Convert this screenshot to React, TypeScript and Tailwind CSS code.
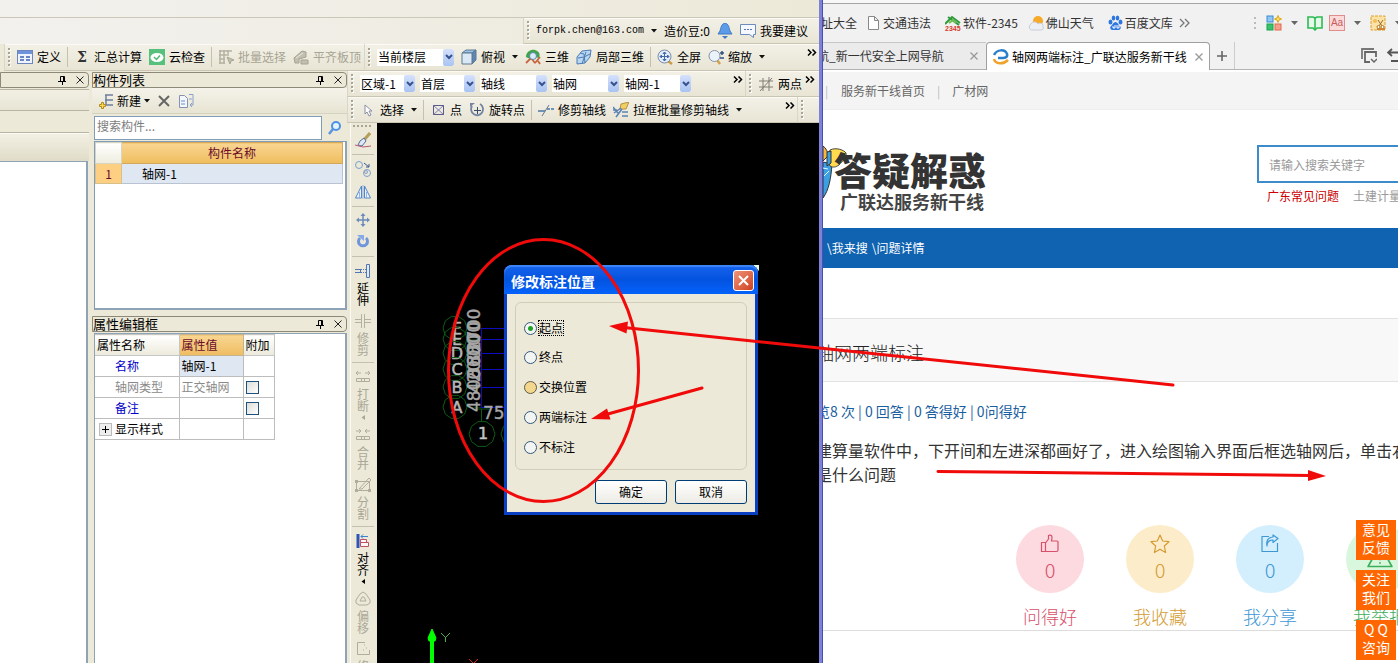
import React from "react";

type Kids = { children?: React.ReactNode };

/* ---------- shared toolbar parts ---------- */

function Svg({ children, w = 16, h = 16, box }: Kids & { w?: number; h?: number; box?: string }) {
  return (
    <svg width={w} height={h} viewBox={box ?? `0 0 ${w} ${h}`} fill="none" className="shrink-0" aria-hidden="true">
      {children}
    </svg>
  );
}

function Grip() {
  return (
    <svg width="3" height="19" viewBox="0 0 3 19" className="shrink-0" aria-hidden="true">
      {[0, 4, 8, 12, 16].map((y) => (
        <g key={y}>
          <rect x="1" y={y + 1} width="2" height="2" fill="#fff" />
          <rect x="0" y={y} width="2" height="2" fill="#a9a594" />
        </g>
      ))}
    </svg>
  );
}

function Bar({ children, className = "" }: Kids & { className?: string }) {
  return (
    <div
      className={`flex items-center overflow-hidden border-b border-[#c9c5b2] bg-linear-to-b from-[#f3f1e7] to-[#e8e5d5] pl-[3px] shadow-[inset_0_1px_0_#fbfaf5] ${className}`}
    >
      <Grip />
      <div className="flex h-full min-w-0 flex-1 items-center gap-[7px] pl-1.5">{children}</div>
    </div>
  );
}

function Tool({ icon, label, off }: { icon: React.ReactNode; label: string; off?: boolean }) {
  return (
    <button type="button" disabled={off} className={`flex shrink-0 items-center gap-1 whitespace-nowrap ${off ? "text-[#a7a493]" : "text-black"}`}>
      {icon}
      {label}
    </button>
  );
}

function Sep() {
  return <span className="-mx-px h-5 w-px shrink-0 bg-[#c5c1ae]" />;
}

function Caret() {
  return (
    <Svg w={6} h={4}>
      <path d="M0 0h6L3 3.5z" fill="#111" />
    </Svg>
  );
}

function More({ className = "" }: { className?: string }) {
  return (
    <button type="button" aria-label="更多" className={`shrink-0 self-start pt-[5px] ${className}`}>
      <Svg w={10} h={7}>
        <path d="M1 .5l3 3-3 3M5.500 .5l3 3-3 3" stroke="#000" strokeWidth="1.500" />
      </Svg>
    </button>
  );
}

function Combo({ value, width, name }: { value: string; width: string; name: string }) {
  return (
    <span className={`relative flex h-[17px] shrink-0 ${width}`}>
      <select aria-label={name} className="w-full appearance-none bg-white pr-3 pl-px text-[12px] leading-[16px]" defaultValue={value}>
        <option>{value}</option>
      </select>
      <span className="pointer-events-none absolute inset-y-0 right-0 flex w-[11px] items-center justify-center rounded-[2px] bg-linear-to-b from-[#d5e1fc] to-[#a9c3f2]">
        <Svg w={8} h={6}>
          <path d="M1 1l3 3 3-3" stroke="#35528f" strokeWidth="2" />
        </Svg>
      </span>
    </span>
  );
}

/* ---------- toolbar icons ---------- */

const DefineIcon = () => (
  <Svg>
    <rect x=".5" y="1.500" width="15" height="13" fill="#eef3fc" stroke="#6f86bd" />
    <rect x="1" y="2" width="14" height="3" fill="#6d93dc" />
    <path d="M3 8h4M3 11h4M9 8h4M9 11h4" stroke="#3d62b4" strokeWidth="1.500" />
  </Svg>
);
const CloudIcon = () => (
  <Svg>
    <rect width="16" height="16" fill="#57c07c" />
    <ellipse cx="8" cy="8.500" rx="6.500" ry="4.500" fill="#fff" />
    <path d="M5 8l2.500 2.500L11 6.500" stroke="#4fb873" strokeWidth="1.500" />
  </Svg>
);
const BatchIcon = () => (
  <Svg>
    <path d="M1 2h13M1 6h8M1 10h6M1 14h6M2 1v14M6 1v14M10 1v6" stroke="#b5b2a2" strokeWidth="1.500" />
    <path d="M9 8l3 7 1-3 3-1z" fill="#c3c0b1" stroke="#a9a696" />
  </Svg>
);
const SlabIcon = () => (
  <Svg>
    <path d="M1 9l8-7 4 1v5l-7 2v4H2zM8 11h7v4H8z" fill="#c2bfb0" stroke="#a5a293" />
    <path d="M3 9l7-5" stroke="#eae7d9" />
  </Svg>
);
const CubeIcon = () => (
  <Svg>
    <path d="M1 4l4-3h10l-4 3z" fill="#9cc4ea" stroke="#5f7891" />
    <path d="M11 4l4-3v10l-4 4z" fill="#5e88b4" stroke="#5f7891" />
    <path d="M1 4h10v11H1z" fill="#dbe9f6" stroke="#5f7891" />
  </Svg>
);
const OrbitIcon = () => (
  <Svg>
    <path d="M1 8C1 2 7 0 10 1s6 3 4 8l-4-1-3 3z" fill="#3fa44b" />
    <path d="M1 14l5-5 4 5M10 14l5-6M13 12l2 3" stroke="#c8653c" strokeWidth="1.800" />
    <circle cx="8" cy="7" r="3.500" fill="#d9ecfa" stroke="#5e84ad" />
  </Svg>
);
const LocalIcon = () => (
  <Svg>
    <path d="M1 8l5-6 9-1-1 7-5 6-8 1z" fill="#b9d6f2" stroke="#4c7cb5" />
    <path d="M4 4l4 1 1 9M6 15l4-12M2 9l6-1 6-3" stroke="#4c7cb5" />
  </Svg>
);
const FullIcon = () => (
  <Svg>
    <path d="M11 12l4 3" stroke="#cc9d3f" strokeWidth="2.500" />
    <circle cx="7.500" cy="7.500" r="6.500" fill="#e3eefb" stroke="#7a8ca8" />
    <path d="M3 7.500h9M7.500 3v9M3 7.500l1.500-1.500v3zM12 7.500l-1.500-1.500v3zM7.500 3L6 4.500h3zM7.500 12L6 10.500h3z" stroke="#466aa5" />
  </Svg>
);
const ZoomIcon = () => (
  <Svg>
    <path d="M9 11l3 4" stroke="#d4a04a" strokeWidth="2.500" />
    <circle cx="6.500" cy="7" r="5.500" fill="#eaf2fb" stroke="#8794a6" />
    <path d="M12 4h4M14 2v4M12 9h4" stroke="#33517f" strokeWidth="1.500" />
  </Svg>
);
const GridIcon = () => (
  <Svg>
    <path d="M5 2v13M11 1v14M1 5h14M1 11h14M2 15L14 2" stroke="#817d72" />
  </Svg>
);
const CursorIcon = () => (
  <Svg>
    <path d="M5 3v9l2-2 2 4 2-1-2-4h3z" fill="#fff" stroke="#8a8fa5" />
  </Svg>
);
const PointIcon = () => (
  <Svg>
    <rect x="3.500" y="3.500" width="10" height="9" stroke="#5c5a86" />
    <path d="M3.500 3.500l10 9M13.500 3.500l-10 9" stroke="#8281b5" />
  </Svg>
);
const RotPointIcon = () => (
  <Svg>
    <path d="M3 4a6 6 0 1 0 8-2" stroke="#7583a0" strokeWidth="1.800" />
    <path d="M1 5V1h5z" fill="#7583a0" />
    <path d="M5 8.500h7M8.500 5v7" stroke="#3b4a68" />
  </Svg>
);
const TrimAxisIcon = () => (
  <Svg>
    <path d="M0 9h7M9 7h3M13 7h3" stroke="#4877a8" strokeWidth="1.500" />
    <path d="M4 14l7-11" stroke="#6a7683" />
  </Svg>
);
const BoxTrimIcon = () => (
  <Svg>
    <path d="M8 2l8-2-3 7H7z" fill="#f0cf65" stroke="#b4923c" />
    <path d="M0 5l5 6M1 11l7-5M3 15l6-8M9 10h6M9 14h6M0 8h4" stroke="#5a83b5" strokeWidth="1.500" />
  </Svg>
);

/* ---------- dock panels ---------- */

function DockHeader({ title }: { title?: string }) {
  return (
    <div className="flex h-4 shrink-0 items-center rounded-r-sm border border-[#8c8979] bg-[#ece9d8]">
      <h2 className="flex-1 text-[13px] leading-[14px] whitespace-nowrap">{title}</h2>
      <button type="button" aria-label="固定" className="mr-1.5 p-0.5">
        <Svg w={8} h={9}>
          <path d="M2.500 .5h4v5M2.500 .5v5M0 5.500h8M4.500 6v3" stroke="#000" />
          <path d="M5.500 1v5" stroke="#000" />
        </Svg>
      </button>
      <button type="button" aria-label="关闭" className="mr-0.5 p-0.5">
        <Svg w={8} h={8}>
          <path d="M.5 .5l7 7M7.500 .5l-7 7" stroke="#222" />
        </Svg>
      </button>
    </div>
  );
}

function ComponentList() {
  return (
    <section className="flex h-[238px] shrink-0 flex-col">
      <DockHeader title="构件列表" />
      <div className="flex h-[26px] shrink-0 items-center gap-1.5 border-b border-[#d6d2c0] bg-linear-to-b from-[#f5f3ea] to-[#e7e4d3] pl-1.5">
        <button type="button" className="flex items-center gap-[3px]">
          <Svg>
            <path d="M7 2h8M7 7h8M7 12h8M8 2v10" stroke="#6c7f9f" strokeWidth="1.500" />
            <path d="M3.500 9.500h2v2h2v2h-2v2h-2v-2h-2v-2h2z" fill="#fbd54e" stroke="#b18d22" />
          </Svg>
          新建
          <Caret />
        </button>
        <button type="button" aria-label="删除" className="px-0.5">
          <Svg w={12} h={12}>
            <path d="M1 1l10 10M11 1L1 11" stroke="#666" strokeWidth="2" />
          </Svg>
        </button>
        <button type="button" aria-label="复制">
          <Svg>
            <path d="M1.500 2.500h5l3 3v9h-8z" fill="#f2f6fd" stroke="#8593af" />
            <path d="M3 8h4M3 11h4" stroke="#6f8fc9" />
            <path d="M11 1.500h4V12M15 12h-3l2-2M12 12l2 2M11 6h3" stroke="#8aa0ca" />
          </Svg>
        </button>
      </div>
      <div className="flex h-[26px] shrink-0 items-center gap-1.5 pt-px pl-0.5">
        <input
          aria-label="搜索构件"
          placeholder="搜索构件..."
          className="h-[24px] min-w-0 flex-1 border border-[#7f9db9] bg-white px-0.5 pb-1 text-[12px] placeholder:text-[#7d7d7d]"
        />
        <button type="button" aria-label="搜索" className="mr-1.5">
          <Svg w={13} h={14}>
            <path d="M5 8l-4 5" stroke="#5c95dd" strokeWidth="2.500" />
            <circle cx="8" cy="5" r="4" fill="#e5f2ff" stroke="#4c92e4" strokeWidth="2" />
          </Svg>
        </button>
      </div>
      <div className="mt-px ml-0.5 flex-1 border border-[#7f9db9] border-r-2 border-b-2 border-r-[#8fa3b7] border-b-[#8fa3b7] bg-white pr-0.5">
        <table className="w-full table-fixed border-collapse">
          <thead>
            <tr className="h-[21px]">
              <th className="w-[26px] border border-[#d8d4c4] bg-linear-to-b from-white to-[#efedde]" />
              <th className="border border-[#d2a95c] bg-linear-to-b from-[#f9d592] to-[#efbd5c] font-normal text-[#6b0b2b]">构件名称</th>
            </tr>
          </thead>
          <tbody>
            <tr className="h-[20px]">
              <td className="border border-[#d8c08a] bg-[#fccf83] text-center text-[#6b0b2b]">1</td>
              <td className="border border-[#b9c3d1] bg-[#dfe7f3] pl-5">轴网-1</td>
            </tr>
          </tbody>
        </table>
      </div>
    </section>
  );
}

const properties = [
  { name: "名称", value: "轴网-1", tone: "text-[#0000c8]", fill: "bg-[#dfe7f3]" },
  { name: "轴网类型", value: "正交轴网", tone: "text-[#8a8a8a]", box: true },
  { name: "备注", value: "", tone: "text-[#0000c8]", box: true },
  { name: "显示样式", value: "", tone: "text-black", expand: true },
];

function PropertyEditor() {
  return (
    <section className="flex min-h-0 flex-1 flex-col">
      <DockHeader title="属性编辑框" />
      <div className="mt-px ml-0.5 flex-1 border-x border-t border-r-2 border-[#8fa3b7] bg-white">
        <table className="w-[180px] table-fixed border-collapse">
          <thead>
            <tr className="h-[21px] text-left">
              <th className="w-[84px] border border-l-0 border-[#c5c5c5] bg-linear-to-b from-white to-[#eceadb] pl-0.5 font-normal">属性名称</th>
              <th className="w-[64px] border border-[#c5b58f] bg-linear-to-b from-[#f8d592] to-[#efbd60] pl-0.5 font-normal text-[#6b0b2b]">属性值</th>
              <th className="border border-[#c5c5c5] bg-linear-to-b from-white to-[#eceadb] pl-0.5 font-normal">附加</th>
            </tr>
          </thead>
          <tbody>
            {properties.map((p) => (
              <tr key={p.name} className="h-[21px]">
                <td className={`border border-l-0 border-[#bdbdbd] ${p.tone}`}>
                  <span className="flex items-center">
                    <span className="flex w-5 justify-center">
                      {p.expand && (
                        <button type="button" aria-label="展开" className="flex size-[13px] items-center justify-center border border-[#bbb] bg-[#eee]">
                          <Svg w={7} h={7}>
                            <path d="M0 3.500h7M3.500 0v7" stroke="#000" />
                          </Svg>
                        </button>
                      )}
                    </span>
                    {p.name}
                  </span>
                </td>
                <td className={`border border-[#bdbdbd] pl-0.5 ${p.name === "轴网类型" ? "text-[#8a8a8a]" : ""} ${p.fill ?? ""}`}>{p.value}</td>
                <td className="border border-[#bdbdbd] pl-0.5">
                  {p.box && (
                    <input
                      type="checkbox"
                      aria-label={`${p.name}附加`}
                      className="block size-[13px] appearance-none border border-[#1c5180] bg-linear-to-br from-[#dcdcd7] to-white"
                    />
                  )}
                </td>
              </tr>
            ))}
          </tbody>
        </table>
      </div>
    </section>
  );
}

/* ---------- vertical toolbar ---------- */

function VTool({ icon, label, off, arrow, name }: { icon: React.ReactNode; label?: string; off?: boolean; arrow?: boolean; name?: string }) {
  return (
    <button type="button" aria-label={name} disabled={off} className={`flex shrink-0 flex-col items-center gap-[3px] ${off ? "text-[#aaa797]" : "text-black"}`}>
      {icon}
      {label && <span className="w-3 text-[12px] leading-[12px] break-all">{label}</span>}
      {arrow && (
        <Svg w={4} h={5}>
          <path d="M4 0v5L.5 2.500z" fill="currentColor" />
        </Svg>
      )}
    </button>
  );
}

const VSep = () => <span className="-my-px h-px w-[22px] shrink-0 bg-[#c5c1ae]" />;

function EditTools() {
  return (
    <div className="flex w-[27px] shrink-0 flex-col items-center gap-[7px] overflow-hidden border-l border-[#fbfaf5] bg-[#ece9d8] pt-0.5 pr-0.5">
      <svg width="20" height="2" className="-mb-0.5 shrink-0" aria-hidden="true">
        {[0, 4, 8, 12, 16].map((x) => (
          <rect key={x} x={x} width="2" height="2" fill="#a9a594" />
        ))}
      </svg>
      <VTool
        name="格式刷"
        icon={
          <Svg>
            <path d="M15 1l-6 7" stroke="#b5a05a" strokeWidth="3" />
            <path d="M9 6l2 3-4 5-4-1 2-4z" fill="#dfe8f5" stroke="#5b6c9b" />
            <path d="M0 13l4 1 4 1 8-1" stroke="#b55a7a" />
          </Svg>
        }
      />
      <VSep />
      <VTool
        name="复制"
        icon={
          <Svg>
            <circle cx="4" cy="4" r="3.500" stroke="#7e9fd0" />
            <circle cx="12" cy="12" r="3.500" stroke="#7e9fd0" />
            <circle cx="11" cy="11" r="1.500" stroke="#8aa0c0" />
            <path d="M9 2l5 4M14 3v3h-3" stroke="#3a5a92" />
          </Svg>
        }
      />
      <VTool
        name="镜像"
        icon={
          <Svg>
            <path d="M6.500 2v12H.5zM9.500 2v12h6z" fill="#eef5ff" stroke="#5384c8" />
            <path d="M4.500 8v6M11.500 8v6" stroke="#8fb3e2" />
            <path d="M8 1v14" stroke="#8fb3e2" />
          </Svg>
        }
      />
      <VSep />
      <VTool
        name="移动"
        icon={
          <Svg h={14} box="0 1 16 14">
            <path d="M8 3v10M3 8h10" stroke="#6b8cba" strokeWidth="1.500" />
            <path d="M8 1l2.500 3h-5zM8 15l2.500-3h-5zM1 8l3-2.500v5zM15 8l-3-2.500v5z" fill="#6b8cba" />
          </Svg>
        }
      />
      <VTool
        name="旋转"
        icon={
          <Svg>
            <path d="M5 4a4.500 4.500 0 1 0 6 0" stroke="#7095dd" strokeWidth="3" />
            <path d="M2 1h7v6z" fill="#86a9e8" />
          </Svg>
        }
      />
      <VSep />
      <VTool
        label="延伸"
        icon={
          <Svg>
            <path d="M0 6.500h7M0 9.500h7M5.500 6v4" stroke="#5377b4" />
            <path d="M8 6.500h3M8 9.500h3" stroke="#5377b4" strokeDasharray="1 1" />
            <path d="M11.500 1.500h3v13h-3z" fill="#dfeafa" stroke="#5377b4" />
          </Svg>
        }
      />
      <VTool
        off
        label="修剪"
        icon={
          <Svg>
            <path d="M6.500 1v14M9.500 1v14M0 6.500h6M0 9.500h6M10 6.500h6M10 9.500h6" stroke="#b4b1a2" />
          </Svg>
        }
      />
      <VSep />
      <VTool
        off
        arrow
        label="打断"
        icon={
          <Svg>
            <path d="M1 4h5M3 2L1 4l2 2M10 4h5M13 2l2 2-2 2M1.500 9.500h13v3h-13zM6.500 10v2M9.500 10v2" stroke="#b0ad9e" />
          </Svg>
        }
      />
      <VTool
        off
        label="合并"
        icon={
          <Svg>
            <path d="M1 4h5M4 2l2 2-2 2M10 4h5M12 2l-2 2 2 2M1.500 9.500h13v3h-13zM6.500 10v2M9.500 10v2" stroke="#b0ad9e" />
          </Svg>
        }
      />
      <VTool
        off
        label="分割"
        icon={
          <Svg>
            <path d="M1.500 4.500h13v9h-13zM4 12L14 1l2 2L7 12z" stroke="#b0ad9e" />
            <path d="M0 3h3v3H0zM0 12h3v3H0zM13 12h3v3h-3z" fill="#b0ad9e" />
          </Svg>
        }
      />
      <VSep />
      <VTool
        arrow
        label="对齐"
        icon={
          <Svg>
            <path d="M3 1v14" stroke="#3153b4" strokeWidth="3" />
            <path d="M6 3.500h7M8 1.500l-2 2 2 2" stroke="#3f7fd0" />
            <path d="M5.500 6.500h6v3h-6zM5.500 9.500h8v4h-8z" fill="#fdf6f6" stroke="#c05063" />
          </Svg>
        }
      />
      <VTool
        off
        label="偏移"
        icon={
          <Svg>
            <path d="M5 3l3-2 3 2 4 6v3l-3 2H4l-3-2V9zM7 6h2l2 4H5z" stroke="#b0ad9e" />
          </Svg>
        }
      />
      <VTool
        off
        label="修改"
        icon={
          <Svg>
            <path d="M10 1.500H2.500v12h12V9" stroke="#b0ad9e" />
            <path d="M9 4h2M11 7h2M8 9h2" stroke="#b0ad9e" strokeDasharray="1 1" />
          </Svg>
        }
      />
    </div>
  );
}

/* ---------- drawing canvas ---------- */

const axes = [
  { id: "F", y: 205 },
  { id: "E", y: 216 },
  { id: "D", y: 230 },
  { id: "C", y: 246 },
  { id: "B", y: 264 },
  { id: "A", y: 284 },
];

const decagon = (cx: number, cy: number, r: number) =>
  Array.from({ length: 10 }, (_, i) => {
    const a = (i * Math.PI) / 5;
    return `${(cx + r * Math.cos(a)).toFixed(1)},${(cy + r * Math.sin(a)).toFixed(1)}`;
  }).join(" ");

function AxisDrawing() {
  return (
    <svg width="442" height="540" viewBox="0 0 442 540" className="block" fontFamily='"DejaVu Sans", sans-serif'>
      {axes.map((a) => (
        <g key={a.id}>
          <polygon points={decagon(78, a.y, 12)} fill="none" stroke="#0e5a14" />
          <path d={`M91 ${a.y + 0.5}H104`} stroke="#14620f" opacity=".5" />
          <path d={`M104 ${a.y + 0.5}H140`} stroke="#0d0dc0" />
          <text x="80" y={a.y + 6} textAnchor="middle" fontSize="16" fill="#b8b8b8" stroke="#b8b8b8" strokeWidth=".5">
            {a.id}
          </text>
        </g>
      ))}
      <path d="M104.500 205v80" stroke="#0d0dc0" />
      <path d="M104.500 286v12M98 286h14" stroke="#0e5a14" />
      {[
        { t: "4800", y: 289 },
        { t: "4200", y: 270 },
        { t: "3600", y: 255 },
        { t: "3300", y: 242 },
        { t: "2700", y: 229 },
      ].map((d) => (
        <text key={d.t} transform={`translate(103 ${d.y}) rotate(-90)`} fontSize="17" fill="#a6a6a6" stroke="#a6a6a6" strokeWidth=".4">
          {d.t}
        </text>
      ))}
      <text x="106" y="296" fontSize="17" fill="#a6a6a6" stroke="#a6a6a6" strokeWidth=".4">
        7500
      </text>
      <polygon points={decagon(105, 311, 13)} fill="none" stroke="#0e5a14" />
      <polygon points={decagon(137, 311, 13)} fill="none" stroke="#0e5a14" />
      <text x="106" y="316" textAnchor="middle" fontSize="16" fill="#c4c4c4" stroke="#c4c4c4" strokeWidth=".5">
        1
      </text>
      <path d="M55 540v-22h-3l-1-3 4-9 4 9-1 3h-3z" fill="#0f0" stroke="#0f0" />
      <path d="M55 515v25" stroke="#0f0" strokeWidth="4" />
      <path d="M64 510l4.500 4.500L73 510M68.500 514v5" stroke="#4fae4f" fill="none" />
      <path d="M92 536l9 9M101 536l-9 9" stroke="#d22" />
      <path d="M376 142h6v6z" fill="#e8fbe8" />
    </svg>
  );
}

const positions = ["起点", "终点", "交换位置", "两端标注", "不标注"];

function PositionDialog() {
  return (
    <div
      role="dialog"
      aria-label="修改标注位置"
      className="absolute top-[142px] left-[127px] flex h-[250px] w-[254px] flex-col rounded-t-lg border-[3px] border-t-0 border-[#0a3fc4] bg-[#ece9d8]"
    >
      <div className="-mx-[3px] flex h-[29px] shrink-0 items-center rounded-t-lg bg-linear-to-b from-[#1663ec] via-[#0453e0] to-[#0462fa] pt-0.5 pr-1 pl-[7px] shadow-[inset_0_2px_1px_#3d86f5]">
        <h2 className="flex-1 text-[14px] font-bold text-white">修改标注位置</h2>
        <button type="button" aria-label="关闭" className="flex size-[21px] items-center justify-center rounded-[3px] border border-white bg-linear-to-br from-[#ee9479] to-[#cf3d1a]">
          <Svg w={11} h={11}>
            <path d="M1 1l9 9M10 1l-9 9" stroke="#fff" strokeWidth="2" />
          </Svg>
        </button>
      </div>
      <fieldset className="mx-2 mt-2 flex h-[168px] flex-col gap-[14px] rounded-md border border-[#d0cdb9] pt-[18px] pl-2">
        {positions.map((p, i) => (
          <label key={p} className="flex items-center gap-0.5 leading-4">
            <input
              type="radio"
              name="position"
              defaultChecked={i === 0}
              className={`size-[13px] appearance-none rounded-full border checked:bg-[radial-gradient(circle,#21a121_0_2px,#f3f5f2_3px)] ${
                i === 2 ? "border-[#5d5a45] bg-[#f3d78d]" : "border-[#33587d] bg-[#f3f5f2]"
              }`}
            />
            <span className={i === 0 ? "leading-[14px] outline-1 outline-dotted" : ""}>{p}</span>
          </label>
        ))}
      </fieldset>
      <div className="mt-[10px] mr-2 flex justify-end gap-2">
        {["确定", "取消"].map((t) => (
          <button key={t} type="button" className="h-6 w-[72px] rounded-[3px] border border-[#003c74] bg-linear-to-b from-white to-[#ecebe5]">
            {t}
          </button>
        ))}
      </div>
    </div>
  );
}

/* ---------- desktop application ---------- */

function DraftingApp() {
  return (
    <div className="flex min-w-0 flex-[819] flex-col overflow-hidden bg-[#ece9d8] text-[12px] leading-[14px] text-black">
      <div className="h-[18px] shrink-0 border-b border-[#cbc8b9] bg-linear-to-r from-[#f2f1ee] to-[#ece9d8]" />
      <div className="flex h-[26px] shrink-0 justify-end bg-linear-to-r from-[#f2f1ee] to-[#ece9d8]">
        <Bar className="w-[296px] border-l border-l-[#d9d6c7]">
          <span className="font-['Liberation_Mono',monospace] text-[10px]">forpk.chen@163.com</span>
          <Caret />
          <span className="whitespace-nowrap">造价豆:0</span>
          <button type="button" aria-label="通知">
            <Svg>
              <path d="M8 0c4 1 4 5 5 8l2 3H1l2-3c1-3 1-7 5-8z" fill="#5b9be8" stroke="#4179c2" />
              <path d="M5 13h6l-3 3z" fill="#4179c2" />
            </Svg>
          </button>
          <Tool
            icon={
              <Svg>
                <path d="M.5 1.500h15v10h-2v3l-4-3h-9z" fill="#f5f9ff" stroke="#6c8bbb" />
                <path d="M4 6.500h8" stroke="#5677ad" strokeDasharray="2 1" />
              </Svg>
            }
            label="我要建议"
          />
        </Bar>
      </div>
      <div className="flex h-[27px] shrink-0">
        <Bar className="ml-1 w-[360px] border-l border-l-[#d9d6c7]">
          <Tool icon={<DefineIcon />} label="定义" />
          <Sep />
          <Tool icon={<span className="w-4 text-center font-['DejaVu_Serif',serif] text-[14px] font-bold text-[#333]">Σ</span>} label="汇总计算" />
          <Tool icon={<CloudIcon />} label="云检查" />
          <Sep />
          <Tool off icon={<BatchIcon />} label="批量选择" />
          <Tool off icon={<SlabIcon />} label="平齐板顶" />
        </Bar>
        <Bar className="flex-1 border-l border-l-[#d9d6c7]">
          <Combo name="楼层" value="当前楼层" width="w-[77px]" />
          <Tool icon={<CubeIcon />} label="俯视" />
          <Caret />
          <Tool icon={<OrbitIcon />} label="三维" />
          <Tool icon={<LocalIcon />} label="局部三维" />
          <Sep />
          <Tool icon={<FullIcon />} label="全屏" />
          <Tool icon={<ZoomIcon />} label="缩放" />
          <Caret />
          <More className="mr-0.5 ml-auto" />
        </Bar>
      </div>
      <div className="flex min-h-0 flex-1">
        <div className="flex w-[89px] shrink-0 flex-col pt-px">
          <DockHeader />
          <div className="mt-px h-[22px] border-y border-[#b9b5a3] bg-linear-to-b from-[#f2f0e4] to-[#e8e5d5]" />
          <div className="h-[22px] border-b border-[#b9b5a3]" />
          <div className="h-[28px] border-t border-[#fbfaf5] bg-linear-to-b from-[#f2f0e4] to-[#e0dcc8]" />
          <div className="mr-px flex-1 border-t border-r-2 border-[#8fa3b7] bg-white" />
        </div>
        <div className="ml-[3px] flex w-[255px] shrink-0 flex-col gap-[6px] pt-px">
          <ComponentList />
          <PropertyEditor />
        </div>
        <div className="flex min-w-0 flex-1 flex-col">
          <div className="flex h-[26px] shrink-0">
            <Bar className="flex-1 border-l border-l-[#d9d6c7]">
              <div className="flex gap-[5px]">
                <Combo name="区域" value="区域-1" width="w-[55px]" />
                <Combo name="层" value="首层" width="w-[55px]" />
                <Combo name="构件类" value="轴线" width="w-[67px]" />
                <Combo name="类型" value="轴网" width="w-[67px]" />
                <Combo name="构件" value="轴网-1" width="w-[67px]" />
              </div>
              <More className="mr-0.5 ml-auto" />
            </Bar>
            <Bar className="w-[74px] border-l border-l-[#d9d6c7]">
              <Tool icon={<GridIcon />} label="两点" />
              <More className="-ml-1" />
            </Bar>
          </div>
          <div className="flex h-[26px] shrink-0">
            <Bar className="flex-1 border-l border-l-[#d9d6c7]">
              <Tool icon={<CursorIcon />} label="选择" />
              <Caret />
              <Sep />
              <Tool icon={<PointIcon />} label="点" />
              <Tool icon={<RotPointIcon />} label="旋转点" />
              <Sep />
              <Tool icon={<TrimAxisIcon />} label="修剪轴线" />
              <Tool icon={<BoxTrimIcon />} label="拉框批量修剪轴线" />
              <Caret />
              <More className="mr-0.5 ml-auto" />
            </Bar>
            <Bar className="w-[22px] border-l border-l-[#d9d6c7]" />
          </div>
          <div className="flex min-h-0 flex-1 pl-[3px]">
            <EditTools />
            <div className="relative min-w-0 flex-1 overflow-hidden bg-black">
              <AxisDrawing />
              <PositionDialog />
            </div>
          </div>
        </div>
      </div>
    </div>
  );
}

/* ---------- browser ---------- */

function GreyCaret() {
  return (
    <Svg w={7} h={5}>
      <path d="M0 0h7L3.500 4z" fill="#666" />
    </Svg>
  );
}

function CloseX() {
  return (
    <Svg w={8} h={8}>
      <path d="M.5 .5l7 7M7.500 .5l-7 7" stroke="#999" strokeWidth="1.300" />
    </Svg>
  );
}

function Bookmark({ icon, label }: { icon?: React.ReactNode; label: string }) {
  return (
    <a href="#" className="flex shrink-0 items-center gap-0.5 whitespace-nowrap">
      {icon}
      {label}
    </a>
  );
}

function BookmarkBar() {
  return (
    <div className="flex h-[39px] shrink-0 items-center border-t border-[#a5a5a5] text-[#333]">
      <div className="-ml-0.5 flex items-center gap-2.5">
        <Bookmark label="址大全" />
        <Bookmark
          icon={
            <Svg w={14} h={14}>
              <path d="M1.500 .5h6l4 4v9h-10zM7.500 .5v4h4" fill="#fff" stroke="#888" />
            </Svg>
          }
          label="交通违法"
        />
        <span className="pl-1">
          <Bookmark
            icon={
              <Svg w={16} h={16}>
                <path d="M0 9l7-7 8 6M3 2l11 8" stroke="#2f9a3b" strokeWidth="2" />
                <path d="M4 8l4-3 3 3" stroke="#6abf4d" strokeWidth="2" />
                <text x="0" y="16" fontSize="7" fontWeight="bold" fill="#d8392b" fontFamily="Liberation Sans, sans-serif">
                  2345
                </text>
              </Svg>
            }
            label="软件-2345"
          />
        </span>
        <Bookmark
          icon={
            <Svg w={16} h={16}>
              <circle cx="10" cy="6" r="5" fill="#f7a928" />
              <path d="M3 15a3.500 3.500 0 0 1 0-6 4 4 0 0 1 7 0 3 3 0 0 1 5 3 2 2 0 0 1-1 3z" fill="#eceff3" stroke="#c9ced6" />
            </Svg>
          }
          label="佛山天气"
        />
        <span className="pl-1">
          <Bookmark
            icon={
              <Svg w={15} h={16}>
                <ellipse cx="2.500" cy="7" rx="2" ry="2.500" fill="#2f77e0" />
                <ellipse cx="5.500" cy="3" rx="1.800" ry="2.500" fill="#2f77e0" />
                <ellipse cx="9.500" cy="3" rx="1.800" ry="2.500" fill="#2f77e0" />
                <ellipse cx="12.500" cy="7" rx="2" ry="2.500" fill="#2f77e0" />
                <path d="M7.500 7c2 0 3 3 5 4.500 1 2-1 4-3 3.500h-4c-2 .5-4-1.500-3-3.500 2-1.500 3-4.500 5-4.500z" fill="#2f77e0" />
                <path d="M5 11v2h2v-3M9 10v3h2v-3" stroke="#fff" />
              </Svg>
            }
            label="百度文库"
          />
        </span>
        <button type="button" aria-label="更多书签" className="-ml-1">
          <Svg w={12} h={10}>
            <path d="M1 1l4 4-4 4M6 1l4 4-4 4" stroke="#777" strokeWidth="1.300" />
          </Svg>
        </button>
      </div>
      <div className="ml-auto flex items-center gap-[9px]">
        <Svg w={4} h={14}>
          <path d="M1 1h2v2H1zM1 6h2v2H1zM1 11h2v2H1z" fill="#bbb" />
        </Svg>
        <Svg>
          <rect x="1" y="1" width="6" height="6" fill="#8fc6f2" stroke="#3d8bd0" />
          <rect x="1" y="9" width="6" height="6" fill="#37c36c" stroke="#1fa14f" />
          <rect x="9" y="9" width="6" height="6" fill="#f6a08c" stroke="#df6a50" />
          <path d="M12 .5l1 2.500 2.500 1L13 5l-1 2.500L11 5 8.500 4 11 3z" fill="#ffe066" stroke="#e0a616" />
        </Svg>
        <GreyCaret />
        <span className="flex gap-1.5">
          <Svg>
            <path d="M1 2h5l2 1 2-1h5v11h-5l-2 2-2-2H1z" fill="#e7f9ea" stroke="#2dbb52" strokeWidth="1.600" />
            <path d="M8 3v11" stroke="#2dbb52" strokeWidth="1.600" />
          </Svg>
          <span className="flex size-4 items-center justify-center border border-[#e08d8d] bg-[#fbdada] font-['Liberation_Sans',sans-serif] text-[10px] text-[#c85c5c]">Aa</span>
        </span>
        <GreyCaret />
        <Svg>
          <rect x="1" y="1" width="14" height="14" fill="#fbe3a6" stroke="#dba233" strokeDasharray="3 1" />
          <path d="M7 13h8v2H7z" fill="#d5832a" />
          <circle cx="5" cy="6" r="2" fill="#f4bd5a" />
          <path d="M8 5l4 6M13 5l-4 6" stroke="#9a6b2c" />
          <circle cx="8.500" cy="12" r="1.500" fill="#fff" stroke="#b5762a" />
          <circle cx="12.500" cy="12" r="1.500" fill="#fff" stroke="#b5762a" />
        </Svg>
        <span className="-mr-1">
          <GreyCaret />
        </span>
      </div>
    </div>
  );
}

function TabStrip() {
  return (
    <div className="flex h-[28px] shrink-0 items-stretch border-b border-[#b3b3b3] text-[#333]">
      <div className="flex w-[163px] shrink-0 items-center border-t border-[#c6c6c6] bg-[#ebebeb]">
        <span className="-ml-1.5 flex-1 whitespace-nowrap">航_新一代安全上网导航</span>
        <button type="button" aria-label="关闭标签页" className="pr-2">
          <CloseX />
        </button>
      </div>
      <div className="-mb-px flex w-[224px] shrink-0 items-center gap-[3px] rounded-t-sm border border-b-0 border-[#9f9f9f] bg-white px-1.5 text-black">
        <Svg>
          <path d="M1 6c3-6 11-6 13-1 1 3-2 4-4 4H5" stroke="#2a7fcb" strokeWidth="2.500" />
          <path d="M1 10c1 5 9 6 14 1" stroke="#f0a32a" strokeWidth="2.500" />
        </Svg>
        <span className="flex-1 whitespace-nowrap">轴网两端标注_广联达服务新干线</span>
        <button type="button" aria-label="关闭标签页">
          <CloseX />
        </button>
      </div>
      <button type="button" aria-label="新标签页" className="border-r border-[#ccc] px-1.5">
        <Svg w={12} h={12}>
          <path d="M1 6h10M6 1v10" stroke="#666" strokeWidth="1.600" />
        </Svg>
      </button>
      <div className="ml-auto flex items-center gap-2.5">
        <Svg>
          <path d="M1 11V1h12" stroke="#777" strokeWidth="1.800" />
          <path d="M9 14H4V4h11v5" stroke="#666" strokeWidth="1.800" />
          <path d="M10 11l3 3 3-3" stroke="#666" strokeWidth="1.500" />
        </Svg>
        <Svg w={11} h={16}>
          <path d="M1 4.500h10M5 1L1 4.500 5 8M4 13h7" stroke="#555" strokeWidth="1.800" />
        </Svg>
      </div>
    </div>
  );
}

function SiteHeader() {
  return (
    <header className="shrink-0 bg-white">
      <div className="mt-0.5 flex h-[38px] items-center border-b border-[#eee] bg-[#f4f4f4] text-[#666]">
        <span className="w-[18px] pl-0.5 text-[#bbb]">|</span>
        <a href="#">服务新干线首页</a>
        <span className="px-3 text-[#bbb]">|</span>
        <a href="#">广材网</a>
      </div>
      <div className="flex h-[118px]">
        <div className="relative flex-1 pt-[37px]">
          <svg width="24" height="60" viewBox="0 0 24 60" className="absolute top-8 left-0" aria-hidden="true">
            <path d="M0 20l9 2c-1 14-3 26-9 34z" fill="#3c9fe0" stroke="#333" />
            <path d="M0 4c3 2 5 6 5 10l-5 5z" fill="#f6b93b" stroke="#333" />
            <path d="M7 8c6-3 14 0 16 3 1 6-4 8-7 12-3 2-6 3-9 1-2-5-2-11 0-16z" fill="#ffdb4d" stroke="#444" />
            <path d="M4 10l4-1v12l-4 3z" fill="#3c9fe0" stroke="#333" />
            <path d="M0 26l5 1M1 34l5-5" stroke="#dff" />
          </svg>
          <h1 className="relative pl-[11px] text-[38px] leading-[44px] font-black whitespace-nowrap text-[#333]">答疑解惑</h1>
          <p className="pl-[17px] text-[18px] leading-5 font-bold whitespace-nowrap text-[#444]">广联达服务新干线</p>
        </div>
        <div className="w-[141px] shrink-0 pt-[35px]">
          <input
            aria-label="搜索"
            placeholder="请输入搜索关键字"
            className="block h-[38px] w-full border-2 border-r-0 border-[#3d8bc9] bg-white pl-2.5 text-[12px] placeholder:text-[#999]"
          />
          <div className="flex gap-3.5 overflow-hidden pt-[5px] pl-2.5 leading-4 whitespace-nowrap text-[#999]">
            <a href="#" className="text-[#c00]">
              广东常见问题
            </a>
            <a href="#">土建计量</a>
          </div>
        </div>
      </div>
      <nav className="flex h-10 items-center gap-1 bg-[#0f63b1] pl-1 text-white">
        <a href="#">\我来搜</a>
        <a href="#">\问题详情</a>
      </nav>
    </header>
  );
}

const votes = [
  {
    label: "问得好",
    disc: "bg-[#fdd9e0]",
    tone: "text-[#d8506a]",
    size: "size-5",
    icon: <path d="M1.500 8.500h4v9h-4zM5.500 9l3-4V1.500c2-1 3.500 0 3.500 2L11.500 7H17c.5 0 1 .5 1 1v8c0 1-.5 1.500-1.500 1.500h-11" />,
  },
  {
    label: "我收藏",
    disc: "bg-[#fdecca]",
    tone: "text-[#d49c34]",
    size: "size-5",
    icon: <path d="M10 1l2.700 6 6.300.7-4.700 4.300 1.300 6.500L10 15.200 4.400 18.500l1.300-6.500L1 7.700 7.300 7z" />,
  },
  {
    label: "我分享",
    disc: "bg-[#d3effd]",
    tone: "text-[#3f98d6]",
    size: "size-5",
    icon: <path d="M9 2.500H2v15h15.500V9M7 12c0-4 2-6 6-6v2.500l5-4L13 1v2C8 3 6 7 7 12z" />,
  },
  {
    label: "我举报",
    disc: "bg-[#d9f7dd]",
    tone: "text-[#3fae5c]",
    size: "size-7",
    icon: <path d="M10 2l8.500 15.500h-17zM10 8v5M10 14.500v1" />,
  },
];

function QuestionPage() {
  return (
    <main className="flex min-h-0 flex-1 flex-col bg-white pt-[50px]">
      <div className="h-16 shrink-0 overflow-hidden border-y border-[#e2e2e2] bg-[#f8f8f8]">
        <h2 className="-ml-[7px] pt-5 text-[18px] leading-[27px] font-light whitespace-nowrap text-[#222]">轴网两端标注</h2>
      </div>
      <div className="-ml-[7px] h-[249px] shrink-0 border-b border-[#ddd] whitespace-nowrap">
        <p className="pt-[19px] text-[14px] leading-5 text-[#1c5f9f]">览8 次 | 0 回答 | 0 答得好 | 0问得好</p>
        <p className="pt-[17px] text-[16px] leading-6 text-[#333]">
          建算量软件中，下开间和左进深都画好了，进入绘图输入界面后框选轴网后，单击右键
          <br />
          是什么问题
        </p>
        <div className="flex gap-[42px] pt-[39px] pl-[200px]">
          {votes.map((v) => (
            <button key={v.label} type="button" className={`flex w-[68px] shrink-0 flex-col items-center font-light ${v.tone}`}>
              <span className={`flex h-[68px] w-[68px] flex-col items-center rounded-full ${v.size === "size-7" ? "pt-[17px]" : "pt-[9px]"} ${v.disc}`}>
                <svg viewBox="0 0 20 20" fill="none" stroke="currentColor" strokeWidth="1.200" strokeLinejoin="round" className={`shrink-0 ${v.size}`} aria-hidden="true">
                  {v.icon}
                </svg>
                <span className="pt-1 text-[20px] leading-6">0</span>
              </span>
              <span className="pt-2.5 text-[18px] leading-[27px]">{v.label}</span>
            </button>
          ))}
        </div>
      </div>
    </main>
  );
}

function Browser() {
  return (
    <div className="relative flex min-w-0 flex-[575] flex-col overflow-hidden bg-[#f1f1f1] text-[12px] leading-[16px]">
      <div className="h-[3px] shrink-0 bg-[#f7f7f7]" />
      <BookmarkBar />
      <TabStrip />
      <SiteHeader />
      <QuestionPage />
      <aside className="absolute right-0.5 bottom-[3px] flex w-10 flex-col gap-2.5">
        {[
          ["意见", "反馈"],
          ["关注", "我们"],
          ["Q Q", "咨询"],
        ].map((t) => (
          <a key={t[0]} href="#" className="flex h-10 flex-col items-center justify-center bg-[#ff6600] pb-1 text-[14px] leading-[18px] text-white">
            <span>{t[0]}</span>
            <span>{t[1]}</span>
          </a>
        ))}
      </aside>
    </div>
  );
}

/* ---------- hand-drawn marks over both windows ---------- */

function Annotations() {
  return (
    <svg width="1398" height="663" viewBox="0 0 1398 663" className="pointer-events-none absolute top-0 left-0" fill="none" stroke="#f00a0a" strokeWidth="3" aria-hidden="true">
      <ellipse cx="543.500" cy="370.500" rx="95" ry="131" />
      <path d="M1173 385L624 327.500M702 388L606 414.500M938 471.500L1310 475.500" strokeLinecap="round" />
      <path d="M609 326l19-4.500-1.500 12zM591 419l16-10.500 3.500 11zM1326 476l-18-6v11z" fill="#f00a0a" stroke="none" />
    </svg>
  );
}

export default function App() {
  return (
    <div className="relative flex h-screen overflow-hidden font-['Noto_Sans_CJK_SC',sans-serif]">
      <DraftingApp />
      <div className="w-1 shrink-0 border-r border-[#4a4fb4] bg-[#7d82d6]" />
      <Browser />
      <Annotations />
    </div>
  );
}
